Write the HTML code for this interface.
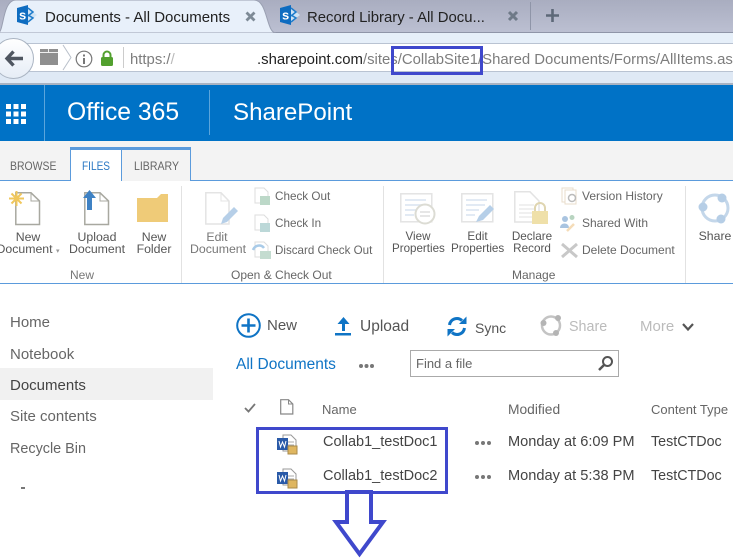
<!DOCTYPE html>
<html><head><meta charset="utf-8"><style>
html,body{margin:0;padding:0;background:#fff}
#p{position:relative;width:739px;height:558px;overflow:hidden;background:#fff;font-family:"Liberation Sans",sans-serif;color:#444}
.a{position:absolute}
.t{position:absolute;white-space:nowrap;line-height:16px}
.r{font-size:12.300px;color:#555;line-height:12px;text-align:center;white-space:nowrap;position:absolute}
.g{color:#777}
.k{font-size:12px;transform-origin:left center}
svg{position:absolute;overflow:visible}
</style></head><body><div id="p">
<!-- tab strip -->
<div class="a" style="left:0;top:0;width:733px;height:33px;background:linear-gradient(#a9adc0,#bcc0d2)"></div>
<div class="a" style="left:0;top:32px;width:733px;height:1px;background:#8f95a8"></div>
<svg style="left:0;top:0" width="290" height="34"><path d="M-2 33C4 33 2 0 16 0H254C268 0 266 33 276 33Z" fill="#e8f0fa" stroke="#9aa0b2"/></svg>
<svg style="left:17px;top:5px" width="21" height="21" viewBox="0 0 21 21"><path d="M0 3L11 0V20L0 17Z" fill="#0e6cc0"/><path d="M11 3L20 10L11 17Z" fill="#cfe3f5"/><path d="M11 3L16 7L11 11M11 10L16 13L11 17" fill="none" stroke="#1e7ccb" stroke-width="1.500"/><text x="2" y="14.500" font-size="13" font-weight="bold" fill="#fff" font-family="Liberation Sans">s</text></svg>
<div class="t" style="left:45px;top:10px;font-size:15px;color:#222">Documents - All Documents</div>
<svg style="left:245px;top:11px" width="11" height="11"><path d="M1.500 1.500L9.500 9.500M9.500 1.500L1.500 9.500" stroke="#7d8a96" stroke-width="2.800"/></svg>
<svg style="left:280px;top:5px" width="21" height="21" viewBox="0 0 21 21"><path d="M0 3L11 0V20L0 17Z" fill="#0e6cc0"/><path d="M11 3L20 10L11 17Z" fill="#cfe3f5"/><path d="M11 3L16 7L11 11M11 10L16 13L11 17" fill="none" stroke="#1e7ccb" stroke-width="1.500"/><text x="2" y="14.500" font-size="13" font-weight="bold" fill="#fff" font-family="Liberation Sans">s</text></svg>
<div class="t" style="left:307px;top:10px;font-size:14.900px;color:#222">Record Library - All Docu...</div>
<svg style="left:507px;top:10px" width="12" height="12"><path d="M2 2L10 10M10 2L2 10" stroke="#6f7a88" stroke-width="3"/></svg>
<div class="a" style="left:530px;top:2px;width:1px;height:28px;background:#8f95a8"></div>
<svg style="left:546px;top:9px" width="13" height="13"><path d="M6.500 0V13M0 6.500H13" stroke="#5d6878" stroke-width="2.600"/></svg>
<!-- nav bar -->
<div class="a" style="left:0;top:33px;width:733px;height:50px;background:#e6eff9"></div>
<div class="a" style="left:0;top:43px;width:733px;height:29px;background:#fff;border-top:1px solid #b9c3d2;border-bottom:1px solid #b9c3d2;box-sizing:border-box"></div>
<div class="a" style="left:0;top:72px;width:733px;height:11px;background:#dfe9f5"></div>
<div class="a" style="left:0;top:83px;width:733px;height:2px;background:#a9b3c2"></div>
<div class="a" style="left:-7px;top:38px;width:39px;height:39px;border-radius:50%;background:linear-gradient(#fff,#e6edf6);border:1px solid #aab4c2"></div>
<svg style="left:5px;top:50px" width="18" height="17" viewBox="0 0 18 17"><path d="M8.500 1.500L2 8.500L8.500 15.500M2 8.500H18" fill="none" stroke="#4f5660" stroke-width="3.400"/></svg>
<div class="a" style="left:40px;top:49px;width:18px;height:16px;background:#8f8f8f"></div>
<div class="a" style="left:40px;top:52px;width:18px;height:1px;background:#eee"></div>
<div class="a" style="left:48px;top:49px;width:1px;height:3px;background:#eee"></div>
<svg style="left:62px;top:44px" width="10" height="27"><path d="M1 1L9 13.500L1 26" fill="none" stroke="#b9c0ca"/></svg>
<svg style="left:75px;top:50px" width="18" height="18"><circle cx="9" cy="9" r="7.800" fill="none" stroke="#777" stroke-width="1.200"/><rect x="8" y="8" width="2" height="6" fill="#777"/><rect x="8" y="4.500" width="2" height="2" fill="#777"/></svg>
<svg style="left:100px;top:50px" width="14" height="16"><path d="M3.500 8V5a3.500 3.500 0 0 1 7 0V8" fill="none" stroke="#52a02e" stroke-width="2"/><rect x="1" y="7" width="12" height="9" rx="1.500" fill="#52a02e"/></svg>
<div class="a" style="left:123px;top:47px;width:1px;height:21px;background:#ccc"></div>
<div class="t" style="left:130px;top:52px;font-size:14.900px;color:#7d7d7d">https:/<span style="color:#bbb">/</span></div>
<div class="t" style="left:257px;top:52px;font-size:14.900px;color:#222">.sharepoint.com<span style="color:#7d7d7d">/sites/CollabSite1/Shared Documents/Forms/AllItems.as</span></div>
<div class="a" style="left:391px;top:46px;width:92px;height:29px;border:3px solid #3f48cc;box-sizing:border-box"></div>
<!-- header -->
<div class="a" style="left:0;top:85px;width:733px;height:56px;background:#0072c6"></div>
<div class="a" style="left:44px;top:85px;width:1px;height:56px;background:#5aa5dc"></div>
<div class="a" style="left:209px;top:90px;width:1px;height:45px;background:#5aa5dc"></div>
<svg style="left:6px;top:104px" width="20" height="20" fill="#fff"><path d="M0 0h5v5H0zM7.500 0h5v5h-5zM15 0h5v5h-5zM0 7.500h5v5H0zM7.500 7.500h5v5h-5zM15 7.500h5v5h-5zM0 15h5v5H0zM7.500 15h5v5h-5zM15 15h5v5h-5z"/></svg>
<div class="t" style="left:67px;top:98px;font-size:24.700px;line-height:30px;color:#fff">Office 365</div>
<div class="t" style="left:233px;top:98px;font-size:24.100px;line-height:30px;color:#fff">SharePoint</div>
<!-- ribbon -->
<div class="a" style="left:0;top:141px;width:733px;height:40px;background:#f3f3f3"></div>
<div class="a" style="left:0;top:180px;width:733px;height:1px;background:#5b9bdc"></div>
<div class="a" style="left:0;top:283px;width:733px;height:1px;background:#5b9bdc"></div>
<div class="a" style="left:70px;top:147px;width:121px;height:34px;background:#f3f3f3;border:1px solid #5b9bdc;border-top:3px solid #5b9bdc;border-bottom:0;box-sizing:border-box"></div>
<div class="a" style="left:71px;top:150px;width:50px;height:31px;background:#fff;border-right:1px solid #5b9bdc;box-sizing:content-box"></div>
<div class="t k" style="left:10px;top:158px;color:#666;transform:scaleX(.87)">BROWSE</div>
<div class="t k" style="left:82px;top:158px;color:#2a78c4;transform:scaleX(.84)">FILES</div>
<div class="t k" style="left:134px;top:158px;color:#666;transform:scaleX(.88)">LIBRARY</div>
<div class="a" style="left:181px;top:186px;width:1px;height:97px;background:#e2e2e2"></div>
<div class="a" style="left:383px;top:186px;width:1px;height:97px;background:#e2e2e2"></div>
<div class="a" style="left:685px;top:186px;width:1px;height:97px;background:#e2e2e2"></div>
<!-- ribbon icons -->
<svg style="left:15px;top:192px" width="26" height="34"><path d="M.8 .8H16L24.500 9V32.500H.8Z" fill="#fff" stroke="#a8a8a0" stroke-width="1.500"/><path d="M16 1V9H24" fill="none" stroke="#a8a8a0"/></svg>
<svg style="left:9px;top:191px" width="15" height="15"><path d="M7.500 0V15M0 7.500H15M2.500 2.500L12.500 12.500M12.500 2.500L2.500 12.500" stroke="#f0c75c" stroke-width="2"/></svg>
<svg style="left:84px;top:192px" width="26" height="34"><path d="M.8 .8H16L24.500 9V32.500H.8Z" fill="#fff" stroke="#a8a8a0" stroke-width="1.500"/><path d="M16 1V9H24" fill="none" stroke="#a8a8a0"/></svg>
<svg style="left:82px;top:190px" width="15" height="21"><path d="M7.500 0L14 8H10V20H5V8H1Z" fill="#3f82c4"/></svg>
<svg style="left:137px;top:194px" width="31" height="28"><path d="M0 4H20L24 0H31V28H0Z" fill="#efcb78"/></svg>
<svg style="left:205px;top:192px" width="32" height="34"><path d="M.8 .8H16L24 9V32H.8Z" fill="#fff" stroke="#e4e4e4" stroke-width="1.500"/><path d="M16 1V9H24" fill="none" stroke="#e4e4e4"/><path d="M16 32L18 26L29 15L33 19L22 30Z" fill="#b6cfe8"/></svg>
<div class="r" style="left:-6px;top:231px;width:68px">New<br>Document <span style="color:#999;font-size:7px">▾</span></div>
<div class="r" style="left:62px;top:231px;width:70px">Upload<br>Document</div>
<div class="r" style="left:134px;top:231px;width:40px">New<br>Folder</div>
<div class="r g" style="left:190px;top:231px;width:54px">Edit<br>Document</div>
<div class="t" style="left:70px;top:267px;font-size:12px;color:#777">New</div>
<div class="t" style="left:231px;top:267px;font-size:12px;color:#666">Open &amp; Check Out</div>
<div class="t" style="left:512px;top:267px;font-size:12px;color:#666">Manage</div>
<svg style="left:254px;top:187px" width="18" height="18"><path d="M1 1H10L14 5V16H1Z" fill="#fff" stroke="#ddd"/><rect x="6" y="9" width="10" height="9" fill="#bcd8c8"/></svg>
<svg style="left:254px;top:214px" width="18" height="18"><path d="M1 1H10L14 5V16H1Z" fill="#fff" stroke="#ddd"/><rect x="6" y="9" width="10" height="9" fill="#bcd8d8"/></svg>
<svg style="left:253px;top:241px" width="19" height="18"><path d="M2 1H11L15 5V16H2Z" fill="#fff" stroke="#ddd"/><path d="M0 9C2 4 8 3 11 7" fill="none" stroke="#a9cbe8" stroke-width="2.500"/><rect x="7" y="10" width="11" height="8" fill="#c4dcd0"/></svg>
<div class="t" style="left:275px;top:189px;font-size:11.700px;color:#666">Check Out</div>
<div class="t" style="left:275px;top:216px;font-size:11.700px;color:#666">Check In</div>
<div class="t" style="left:275px;top:243px;font-size:11.600px;color:#666">Discard Check Out</div>
<svg style="left:400px;top:193px" width="36" height="32"><rect x=".8" y=".8" width="31" height="28" fill="#fff" stroke="#e3e3e3" stroke-width="1.500"/><path d="M5 7H26M5 12H24M5 17H16M5 22H14" stroke="#d9e4f0" stroke-width="1.500"/><circle cx="25" cy="21" r="9.500" fill="#fff" stroke="#dcdcd4" stroke-width="2"/><path d="M20 19H30M20 23H30" stroke="#ccc"/></svg>
<svg style="left:461px;top:193px" width="36" height="32"><rect x=".8" y=".8" width="31" height="28" fill="#fff" stroke="#e3e3e3" stroke-width="1.500"/><path d="M5 7H26M5 12H24M5 17H18M5 22H14" stroke="#d9e4f0" stroke-width="1.500"/><path d="M15 29L18 23L29 12L33 16L22 27Z" fill="#b6cfe8"/></svg>
<svg style="left:514px;top:191px" width="36" height="36"><path d="M.8 .8H16L25 10V31H.8Z" fill="#fff" stroke="#e3e3e3" stroke-width="1.500"/><path d="M5 14H20M5 18H20M5 22H18M5 26H18" stroke="#e2e2e2"/><path d="M21 20V17a5 5 0 0 1 10 0V20" fill="none" stroke="#dfd5b0" stroke-width="2"/><rect x="18" y="20" width="16" height="13" fill="#efe0a9"/></svg>
<div class="r" style="left:392px;top:231px;width:52px;font-size:11.600px">View<br>Properties</div>
<div class="r" style="left:451px;top:231px;width:53px;font-size:11.700px">Edit<br>Properties</div>
<div class="r" style="left:509px;top:231px;width:46px;font-size:11.700px">Declare<br>Record</div>
<svg style="left:561px;top:186px" width="18" height="20"><rect x="1" y="2" width="11" height="14" fill="#fff" stroke="#e8dccb"/><rect x="4" y="4" width="11" height="14" fill="#fff" stroke="#e8dccb"/><circle cx="11" cy="12" r="3.500" fill="none" stroke="#bbb" stroke-width="1.500"/></svg>
<svg style="left:560px;top:214px" width="19" height="18"><circle cx="5" cy="5" r="3" fill="#a9c4e0"/><circle cx="12" cy="3.500" r="2.500" fill="#b8d4c0"/><path d="M0 14C0 8 9 8 9 14Z" fill="#a9c4e0"/><path d="M7 17L14 10" stroke="#f5dcb8" stroke-width="2.500"/></svg>
<svg style="left:561px;top:243px" width="17" height="15"><path d="M1 1L16 14M16 1L1 14" stroke="#c8c8c8" stroke-width="3"/></svg>
<div class="t" style="left:582px;top:188px;font-size:12px;color:#666">Version History</div>
<div class="t" style="left:582px;top:215px;font-size:12px;color:#666">Shared With</div>
<div class="t" style="left:582px;top:242px;font-size:12px;color:#666">Delete Document</div>
<svg style="left:698px;top:192px" width="33" height="33"><circle cx="17" cy="16" r="13" fill="none" stroke="#c4d7ea" stroke-width="3"/><circle cx="24" cy="6" r="4.500" fill="#b6cee6"/><circle cx="5" cy="15" r="4.500" fill="#b6cee6"/><circle cx="23" cy="27" r="4.500" fill="#b6cee6"/></svg>
<div class="r" style="left:695px;top:230px;width:40px">Share</div>
<!-- left nav -->
<div class="a" style="left:0;top:368px;width:213px;height:32px;background:#f1f1f1"></div>
<div class="t" style="left:10px;top:315px;font-size:15px;color:#666">Home</div>
<div class="t" style="left:10px;top:347px;font-size:15px;color:#666">Notebook</div>
<div class="t" style="left:10px;top:378px;font-size:15px;color:#444">Documents</div>
<div class="t" style="left:10px;top:409px;font-size:15px;color:#666">Site contents</div>
<div class="t" style="left:10px;top:441px;font-size:14.400px;color:#666">Recycle Bin</div>
<div class="a" style="left:21px;top:487px;width:4px;height:2px;background:#777"></div>
<!-- toolbar -->
<svg style="left:236px;top:313px" width="26" height="26"><circle cx="12.500" cy="12.500" r="11.300" fill="#fff" stroke="#0f74c5" stroke-width="2"/><path d="M12.500 5.500V19.500M5.500 12.500H19.500" stroke="#0f74c5" stroke-width="2.600"/></svg>
<div class="t" style="left:267px;top:318px;font-size:15px;color:#555">New</div>
<svg style="left:335px;top:316px" width="17" height="20"><path d="M8.500 1L14.500 8H10V15H7V8H2.500Z" fill="#0f74c5"/><rect x="0" y="17" width="16" height="2.500" fill="#0f74c5"/></svg>
<div class="t" style="left:360px;top:319px;font-size:15.500px;color:#555">Upload</div>
<svg style="left:447px;top:316px" width="20" height="21" viewBox="0 0 20 21"><path d="M2.500 9A7.500 7.500 0 0 1 15 4.500" fill="none" stroke="#0f74c5" stroke-width="3"/><path d="M12 8H19.500V.5Z" fill="#0f74c5"/><path d="M17.500 12A7.500 7.500 0 0 1 5 16.500" fill="none" stroke="#0f74c5" stroke-width="3"/><path d="M8 13H.5V20.500Z" fill="#0f74c5"/></svg>
<div class="t" style="left:475px;top:320px;font-size:14px;color:#555">Sync</div>
<svg style="left:541px;top:315px" width="22" height="22"><circle cx="10" cy="10.500" r="9" fill="none" stroke="#c4c4c4" stroke-width="2.500"/><circle cx="17" cy="3" r="3" fill="#b4b4b4"/><circle cx="2.500" cy="8" r="3" fill="#b4b4b4"/><circle cx="15" cy="18" r="3" fill="#b4b4b4"/></svg>
<div class="t" style="left:569px;top:319px;font-size:14.300px;color:#bbb">Share</div>
<div class="t" style="left:640px;top:319px;font-size:15px;color:#bbb">More</div>
<svg style="left:682px;top:323px" width="12" height="9"><path d="M1 1L6 6.500L11 1" fill="none" stroke="#555" stroke-width="2.200"/></svg>
<!-- view row -->
<div class="t" style="left:236px;top:357px;font-size:15.500px;color:#0f74c5">All Documents</div>
<div class="a" style="left:359px;top:364px;width:4px;height:4px;border-radius:50%;background:#777;box-shadow:5.500px 0 #777,11px 0 #777"></div>
<div class="a" style="left:410px;top:350px;width:209px;height:27px;border:1px solid #aaa;box-sizing:border-box"></div>
<div class="t" style="left:416px;top:356px;font-size:13px;color:#666">Find a file</div>
<svg style="left:597px;top:355px" width="17" height="17"><circle cx="10.500" cy="6.500" r="4.500" fill="none" stroke="#555" stroke-width="2"/><path d="M7 10L2 15" stroke="#555" stroke-width="2.500"/></svg>
<!-- list header -->
<svg style="left:244px;top:403px" width="12" height="10"><path d="M1 5L4.500 8.500L11 1" fill="none" stroke="#777" stroke-width="1.800"/></svg>
<svg style="left:280px;top:399px" width="14" height="16"><path d="M.7 .7H8.500L12.800 5V15H.7Z" fill="#fff" stroke="#888" stroke-width="1.200"/><path d="M8.500 1V5H12.500" fill="none" stroke="#888"/></svg>
<div class="t" style="left:322px;top:402px;font-size:13px;color:#666">Name</div>
<div class="t" style="left:508px;top:402px;font-size:13.800px;color:#666">Modified</div>
<div class="t" style="left:651px;top:402px;font-size:13px;color:#666">Content Type</div>
<!-- rows -->
<svg style="left:277px;top:434px" width="21" height="21"><path d="M6 1H14L19 6V17H6Z" fill="#fff" stroke="#999"/><path d="M11 8H17M11 11H17" stroke="#aaa"/><rect x="0" y="4" width="11" height="12" fill="#2a5aa8"/><path d="M2 7L3.500 13L5.500 8L7.500 13L9 7" fill="none" stroke="#fff"/><rect x="11" y="12" width="9" height="8" fill="#dfb660" stroke="#a98a4a"/></svg>
<svg style="left:277px;top:468px" width="21" height="21"><path d="M6 1H14L19 6V17H6Z" fill="#fff" stroke="#999"/><path d="M11 8H17M11 11H17" stroke="#aaa"/><rect x="0" y="4" width="11" height="12" fill="#2a5aa8"/><path d="M2 7L3.500 13L5.500 8L7.500 13L9 7" fill="none" stroke="#fff"/><rect x="11" y="12" width="9" height="8" fill="#dfb660" stroke="#a98a4a"/></svg>
<div class="t" style="left:323px;top:434px;font-size:14.500px;color:#444">Collab1_testDoc1</div>
<div class="t" style="left:323px;top:468px;font-size:14.500px;color:#444">Collab1_testDoc2</div>
<div class="a" style="left:475px;top:441px;width:4px;height:4px;border-radius:50%;background:#777;box-shadow:6px 0 #777,12px 0 #777"></div>
<div class="a" style="left:475px;top:475px;width:4px;height:4px;border-radius:50%;background:#777;box-shadow:6px 0 #777,12px 0 #777"></div>
<div class="t" style="left:508px;top:434px;font-size:14.600px;color:#444">Monday at 6:09 PM</div>
<div class="t" style="left:508px;top:468px;font-size:14.600px;color:#444">Monday at 5:38 PM</div>
<div class="t" style="left:651px;top:434px;font-size:14.300px;color:#444">TestCTDoc</div>
<div class="t" style="left:651px;top:468px;font-size:14.300px;color:#444">TestCTDoc</div>
<!-- annotations -->
<div class="a" style="left:256px;top:427px;width:192px;height:67px;border:3px solid #3f48cc;box-sizing:border-box"></div>
<svg style="left:330px;top:489px" width="60" height="69"><path d="M17 3H41V33H53L29.500 65L6 33H17Z" fill="#fff" stroke="#3f48cc" stroke-width="4"/></svg>
</div></body></html>
